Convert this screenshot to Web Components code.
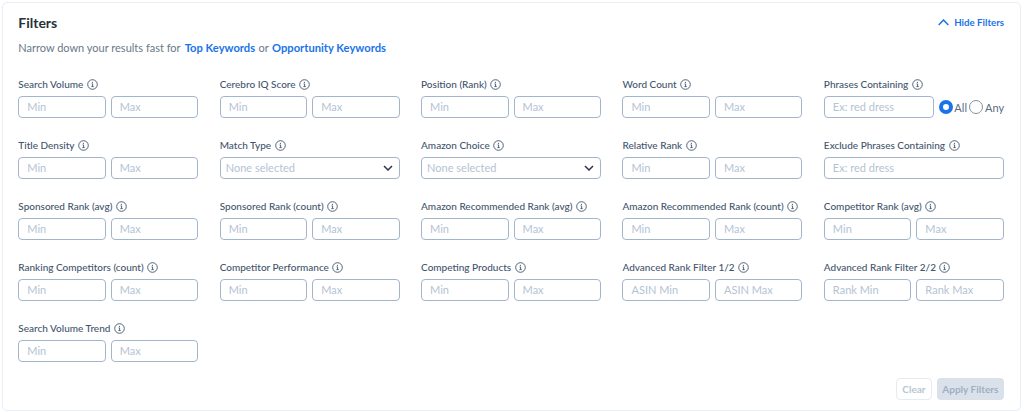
<!DOCTYPE html>
<html><head><meta charset="utf-8"><style>
html,body{margin:0;padding:0;background:#fff}
body{font-family:"Lato","Open Sans",sans-serif;width:1024px;height:412px;overflow:hidden}
</style></head><body>
<filter-card>
<span slot="title">Filters</span>
<filter-field label="Search Volume"><range-pair></range-pair></filter-field>
<filter-field label="Cerebro IQ Score"><range-pair></range-pair></filter-field>
<filter-field label="Position (Rank)"><range-pair></range-pair></filter-field>
<filter-field label="Word Count"><range-pair></range-pair></filter-field>
<filter-field label="Phrases Containing"><phrase-input radio></phrase-input></filter-field>
<filter-field label="Title Density"><range-pair></range-pair></filter-field>
<filter-field label="Match Type"><select-box></select-box></filter-field>
<filter-field label="Amazon Choice"><select-box></select-box></filter-field>
<filter-field label="Relative Rank"><range-pair></range-pair></filter-field>
<filter-field label="Exclude Phrases Containing"><phrase-input></phrase-input></filter-field>
<filter-field label="Sponsored Rank (avg)"><range-pair></range-pair></filter-field>
<filter-field label="Sponsored Rank (count)"><range-pair></range-pair></filter-field>
<filter-field label="Amazon Recommended Rank (avg)"><range-pair></range-pair></filter-field>
<filter-field label="Amazon Recommended Rank (count)"><range-pair></range-pair></filter-field>
<filter-field label="Competitor Rank (avg)"><range-pair></range-pair></filter-field>
<filter-field label="Ranking Competitors (count)"><range-pair></range-pair></filter-field>
<filter-field label="Competitor Performance"><range-pair></range-pair></filter-field>
<filter-field label="Competing Products"><range-pair></range-pair></filter-field>
<filter-field label="Advanced Rank Filter 1/2"><range-pair min="ASIN Min" max="ASIN Max"></range-pair></filter-field>
<filter-field label="Advanced Rank Filter 2/2"><range-pair min="Rank Min" max="Rank Max"></range-pair></filter-field>
<filter-field label="Search Volume Trend"><range-pair></range-pair></filter-field>
</filter-card>
<script>
const boxCss=`box-sizing:border-box;height:22px;border:1px solid #a3b5cb;border-radius:4px;background:#fff;font:11px Lato,"Open Sans",sans-serif;color:#b4c3d3;`;
class FilterCard extends HTMLElement{constructor(){super();this.attachShadow({mode:'open'}).innerHTML=`<style>
:host{display:flex;flex-direction:column;box-sizing:border-box;margin:2px 3.5px 1px 2px;height:409px;border:1px solid #e9eef4;border-radius:5px;padding:0 15.5px 10px 15.3px;color:#3f5068}
.head{display:flex;justify-content:space-between;align-items:center;height:38px}
.title{font-size:14px;font-weight:700;color:#28303b}
.hide{display:flex;align-items:center;gap:5.3px;font-size:9.7px;font-weight:700;color:#1a73e8}
.sub{font-size:11px;color:#6a7888;height:16px;line-height:16px;margin-top:-1px;white-space:pre}
.sub b{color:#1a73e8;font-weight:700;font-size:11.2px;margin:0 .6px}
.sub b:first-child{margin-left:1.5px}
.grid{display:grid;grid-template-columns:repeat(5,180px);column-gap:21.4px;row-gap:19px;margin-top:20px;align-content:start;flex:1}
.foot{display:flex;justify-content:flex-end;gap:5px}
.btn{box-sizing:border-box;height:22px;border-radius:4px;font-size:10px;font-weight:700;display:flex;align-items:center;justify-content:center}
.clear{width:35.5px;border:1px solid #e6ebf1;color:#b8c6d6}
.apply{width:67.3px;background:#dbe1ea;color:#9eafc3}
</style>
<div class="head"><span class="title"><slot name="title"></slot></span>
<span class="hide"><svg width="11" height="7" viewBox="0 0 11 7" fill="none" stroke="#1a73e8" stroke-width="1.5"><path d="M.7 6l4.8-5 4.8 5"/></svg>Hide Filters</span></div>
<div class="sub">Narrow down your results fast for <b>Top Keywords</b> or <b>Opportunity Keywords</b></div>
<div class="grid"><slot></slot></div>
<div class="foot"><span class="btn clear">Clear</span><span class="btn apply">Apply Filters</span></div>`}}
class FilterField extends HTMLElement{connectedCallback(){if(this.shadowRoot)return;this.attachShadow({mode:'open'}).innerHTML=`<style>
:host{display:flex;flex-direction:column;gap:4px;min-width:0}
.l{display:flex;align-items:center;gap:3.5px;height:16px;font-size:10px;font-weight:500;color:#43556c;white-space:nowrap}
svg{flex:none}
</style><div class="l"><span>${this.getAttribute('label')}</span><svg width="11" height="11" viewBox="0 0 11 11" fill="none" stroke="#43556c"><circle cx="5.5" cy="5.5" r="4.8" stroke-width=".9"/><path d="M4.6 4.9h1v2.6M4.4 7.6h2.3" stroke-width=".9"/><circle cx="5.4" cy="3.3" r=".6" fill="#43556c" stroke="none"/></svg></div><slot></slot>`}}
class RangePair extends HTMLElement{connectedCallback(){if(this.shadowRoot)return;const a=this.getAttribute('min')||'Min',b=this.getAttribute('max')||'Max';this.attachShadow({mode:'open'}).innerHTML=`<style>
:host{display:flex;gap:5px}
span{flex:1;${boxCss}padding-left:8px;line-height:20px}
</style><span>${a}</span><span>${b}</span>`}}
class PhraseInput extends HTMLElement{connectedCallback(){if(this.shadowRoot)return;const r=this.hasAttribute('radio');this.attachShadow({mode:'open'}).innerHTML=`<style>
:host{display:flex;align-items:center}
.i{${boxCss}padding-left:8px;line-height:20px;flex:none;width:${r?'110px':'100%'}}
.r{display:flex;align-items:center;font-size:11px;color:#5b6b80;margin-left:5px;white-space:nowrap}
.o{box-sizing:border-box;width:14px;height:14px;border-radius:50%;border:1px solid #8193a8;margin:0 1.5px 0 2.5px}
.o.on{border:4.2px solid #1a73e8;margin:0 1.5px 0 0}
</style><span class="i">Ex: red dress</span>${r?'<span class="r"><span class="o on"></span>All<span class="o"></span>Any</span>':''}`}}
class SelectBox extends HTMLElement{constructor(){super();this.attachShadow({mode:'open'}).innerHTML=`<style>
:host{display:flex;${boxCss}align-items:center;justify-content:space-between;padding:0 6px 0 5px}
span{margin-top:-1px}
</style><span>None selected</span><svg width="10" height="6" viewBox="0 0 10 6" fill="none" stroke="#2c3644" stroke-width="1.5"><path d="M1 1l4 4 4-4"/></svg>`}}
customElements.define('filter-card',FilterCard);customElements.define('filter-field',FilterField);customElements.define('range-pair',RangePair);customElements.define('phrase-input',PhraseInput);customElements.define('select-box',SelectBox);
</script></body></html>
